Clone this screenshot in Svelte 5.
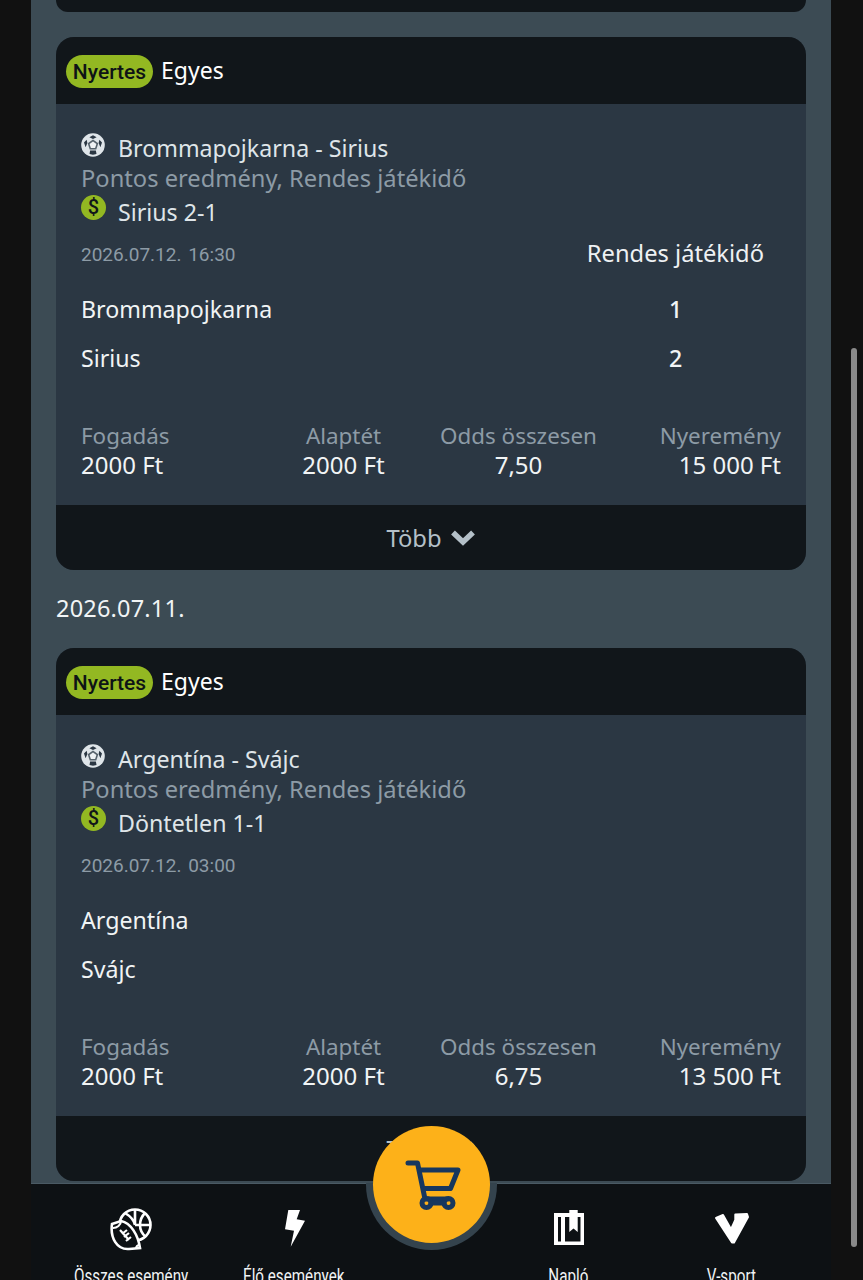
<script>
  const bets = [
    {
      match: 'Brommapojkarna - Sirius',
      tip: 'Sirius 2-1',
      date: '2026.07.12. 16:30',
      period: 'Rendes játékidő',
      teams: [['Brommapojkarna', '1'], ['Sirius', '2']],
      odds: '7,50',
      win: '15 000 Ft'
    },
    {
      match: 'Argentína - Svájc',
      tip: 'Döntetlen 1-1',
      date: '2026.07.12. 03:00',
      period: '',
      teams: [['Argentína', ''], ['Svájc', '']],
      odds: '6,75',
      win: '13 500 Ft'
    }
  ];
</script>

<div class="screen">
  <main class="panel">
    <div class="stub"></div>

    {#each bets as bet, i}
      {#if i > 0}
        <div class="day">2026.07.11.</div>
      {/if}
      <section class="card">
        <header class="card-head">
          <span class="badge">Nyertes</span>
          <span class="kind">Egyes</span>
        </header>

        <div class="card-body">
          <div class="line match">
            <svg class="ico" viewBox="0 0 24 24">
              <circle cx="12" cy="12" r="11.800" fill="#dfe5e9" />
              <path d="M12 6.500l5.300 3.800-2 6.200H8.700l-2-6.200z" fill="#55616b" />
              <path d="M12 8.500l3.400 2.500-1.300 4H9.900L8.600 11z" fill="#eef1f3" />
              <path d="M12 2.200l3.600 2-3.600 1.800-3.600-1.800zM3 9.500l2.600-2.700.8 3.200-1.800 4.200zM21 9.500l-2.600-2.700-.8 3.200 1.800 4.200zM8.500 21l.6-3.600h5.800l.6 3.600-3.500.7z" fill="#2b3743" />
            </svg>
            <span>{bet.match}</span>
          </div>
          <div class="market">Pontos eredmény, Rendes játékidő</div>
          <div class="line tip">
            <span class="dollar">$</span>
            <span>{bet.tip}</span>
          </div>

          <div class="date-row">
            <span class="date">{bet.date}</span>
            <span class="period">{bet.period}</span>
          </div>

          {#each bet.teams as team}
            <div class="team">
              <span>{team[0]}</span>
              <span class="score">{team[1]}</span>
            </div>
          {/each}

          <div class="totals">
            <div class="col">
              <span class="lbl">Fogadás</span>
              <span class="val">2000 Ft</span>
            </div>
            <div class="col mid">
              <span class="lbl">Alaptét</span>
              <span class="val">2000 Ft</span>
            </div>
            <div class="col mid">
              <span class="lbl">Odds összesen</span>
              <span class="val">{bet.odds}</span>
            </div>
            <div class="col end">
              <span class="lbl">Nyeremény</span>
              <span class="val">{bet.win}</span>
            </div>
          </div>
        </div>

        <footer class="card-foot">
          <span>Több</span>
          <svg class="chev" viewBox="0 0 26 18">
            <path d="M3 3.500L13 13l10-9.500" fill="none" stroke="#b4c0c8" stroke-width="5.500" />
          </svg>
        </footer>
      </section>
    {/each}
  </main>

  <nav class="nav">
    <div class="nav-item">
      <svg class="nav-ico" viewBox="0 0 44 44" fill="none" stroke="#fff" stroke-width="2.600">
        <circle cx="26" cy="18" r="15.500" />
        <path d="M26 3v15M26 18h15M16 6c5 3 9 7 10 12M36 6c-3 3-5 7-5 12 0 5 2 9 6 12" />
        <path d="M3 17l9-3c10 2 17 14 19 27l-11 1C8 43 1 31 3 17z" fill="#0d1114" />
        <path d="M4 21c4 0 8-3 8-7M27 42c0-3 1-4 4-4" stroke-width="2" />
        <path d="M11 23l9 10M18 23l-5 4M20 26l-5 4M22 30l-5 4" stroke-width="2.200" />
      </svg>
      <span class="nav-label">Összes esemény</span>
    </div>
    <div class="nav-item">
      <svg class="nav-ico" viewBox="0 0 44 44">
        <path d="M16.300 3H28l-3.300 9.300 8.300 1.400-14.300 26L22 23.700l-9-1.400z" fill="#fff" />
      </svg>
      <span class="nav-label">Élő események</span>
    </div>
    <div class="nav-item"></div>
    <div class="nav-item">
      <svg class="nav-ico" viewBox="0 0 44 44">
        <path fill-rule="evenodd" fill="#fff" d="M8 6h15.300V3h8.400v3H38v32H8zM12 10v24.500h3V10zM19 10v24.500h15.500V10h-2.800v15l-4.200-3.500-4.200 3.500V10z" />
      </svg>
      <span class="nav-label">Napló</span>
    </div>
    <div class="nav-item">
      <svg class="nav-ico" viewBox="0 0 44 44">
        <path fill="#fff" stroke="#fff" stroke-width="2" stroke-linejoin="round" d="M7 11l7-3 8 14.300 4.300-9.300V7.500L38 7l1 3-14 25.500h-2z" />
      </svg>
      <span class="nav-label">V-sport</span>
    </div>
  </nav>

  <div class="fab-ring">
    <button class="fab" aria-label="Kosár">
      <svg viewBox="0 0 66 60" fill="none" stroke="#17375e" stroke-width="5" stroke-linejoin="round" stroke-linecap="round">
        <path d="M9 8h9.500l7.500 36h23" />
        <path d="M21 15h38l-7.500 18.500H25" />
        <circle cx="27.500" cy="48" r="4.500" />
        <circle cx="49.500" cy="48" r="4.500" />
        <path d="M32 48h13" />
      </svg>
    </button>
  </div>

  <div class="scrollbar"></div>
</div>

<style>
  :global(body) {
    margin: 0;
    background: #111111;
  }

  .screen {
    position: relative;
    width: 863px;
    height: 1280px;
    overflow: hidden;
    background: #111111;
    font-family: 'Noto Sans', 'Open Sans', sans-serif;
    color: #fff;
  }

  .panel {
    width: 800px;
    height: 1280px;
    margin-left: 31px;
    padding: 0 25px;
    box-sizing: border-box;
    background: #3c4b54;
  }

  .stub {
    height: 12px;
    margin-bottom: 25px;
    background: #11161a;
    border-radius: 0 0 18px 18px;
  }

  .day {
    height: 78px;
    line-height: 76px;
    font-size: 23.500px;
    letter-spacing: 0.2px;
    color: #f1f4f5;
  }

  .card {
    height: 533px;
    display: flex;
    flex-direction: column;
    border-radius: 18px;
    overflow: hidden;
    background: #2b3743;
  }

  .card-head {
    height: 67px;
    flex: none;
    display: flex;
    align-items: center;
    padding: 0 10px;
    gap: 8px;
    background: #11161a;
  }

  .badge {
    height: 33px;
    width: 87px;
    margin-top: 1px;
    border-radius: 17px;
    background: #93b822;
    color: #0e1316;
    font-family: Roboto, sans-serif;
    font-weight: 500;
    font-size: 21px;
    line-height: 34px;
    text-align: center;
  }

  .kind {
    font-size: 23px;
    margin-top: -1px;
  }

  .card-body {
    flex: 1;
    position: relative;
    padding: 26px 25px 0;
  }

  .line {
    display: flex;
    align-items: flex-start;
    gap: 13px;
    font-size: 23.200px;
    color: #dfe5e9;
  }

  .match {
    height: 34px;
    line-height: 37px;
  }

  .ico {
    width: 24px;
    height: 24px;
    margin-top: 3px;
  }

  .market {
    height: 27px;
    line-height: 28px;
    font-size: 23.700px;
    color: #8d9ba6;
    white-space: nowrap;
  }

  .tip {
    height: 38px;
    gap: 12px;
    line-height: 43px;
  }

  .dollar {
    width: 25px;
    height: 25px;
    margin-top: 4px;
    border-radius: 50%;
    background: #93b822;
    color: #10151a;
    font-family: Roboto, sans-serif;
    font-weight: 500;
    font-size: 20px;
    line-height: 25px;
    text-align: center;
  }

  .date-row {
    display: flex;
    justify-content: space-between;
    align-items: center;
    height: 48px;
    margin: 1px 0 7px;
    padding-right: 17px;
  }

  .date {
    font-family: Roboto, sans-serif;
    font-size: 19px;
    color: #8d9ba6;
    word-spacing: 2px;
  }

  .period {
    font-size: 23.700px;
    color: #eef1f3;
    margin-top: -2px;
  }

  .team {
    position: relative;
    height: 49px;
    line-height: 49px;
    font-size: 23.200px;
    color: #f1f4f5;
  }

  .score {
    position: absolute;
    left: 588px;
    font-weight: 500;
  }

  .totals {
    position: absolute;
    left: 25px;
    right: 25px;
    top: 318px;
    display: grid;
    grid-template-columns: repeat(4, 1fr);
  }

  .col {
    display: flex;
    flex-direction: column;
    white-space: nowrap;
  }

  .mid {
    align-items: center;
  }

  .end {
    align-items: flex-end;
  }

  .lbl {
    font-size: 22.400px;
    line-height: 28px;
    color: #8d9ba6;
  }

  .val {
    font-size: 24px;
    line-height: 29px;
    color: #f1f4f5;
  }

  .card-foot {
    height: 65px;
    flex: none;
    display: flex;
    align-items: center;
    justify-content: center;
    gap: 8px;
    background: #11161a;
    font-size: 23.800px;
    color: #b4c0c8;
  }

  .chev {
    width: 26px;
    height: 18px;
  }

  .nav {
    position: absolute;
    left: 31px;
    top: 1183px;
    width: 800px;
    height: 97px;
    box-sizing: border-box;
    display: grid;
    grid-template-columns: 200px 126px 148px 126px 200px;
    background: #0d1114;
    border-top: 1px solid #4a5a64;
  }

  .nav-item {
    display: flex;
    flex-direction: column;
    align-items: center;
    gap: 13px;
    padding-top: 23px;
    font-family: Roboto, sans-serif;
    font-size: 20px;
    line-height: 24px;
    color: #f1f4f5;
    white-space: nowrap;
  }

  .nav-label {
    transform: scaleX(0.76);
  }

  .nav-ico {
    width: 44px;
    height: 44px;
    flex: none;
  }

  .fab-ring {
    position: absolute;
    left: 366px;
    top: 1119px;
    width: 131px;
    height: 131px;
    border-radius: 50%;
    background: linear-gradient(to bottom, transparent 49%, #34434d 49%);
  }

  .fab {
    position: absolute;
    left: 7px;
    top: 7px;
    width: 117px;
    height: 117px;
    padding: 0;
    border: 0;
    border-radius: 50%;
    background: #fdb119;
    display: flex;
    align-items: center;
    justify-content: center;
  }

  .fab svg {
    width: 66px;
    height: 60px;
    flex: none;
  }

  .scrollbar {
    position: absolute;
    left: 851px;
    top: 348px;
    width: 6px;
    height: 899px;
    border-radius: 3px;
    background: #8a8a8a;
  }
</style>
